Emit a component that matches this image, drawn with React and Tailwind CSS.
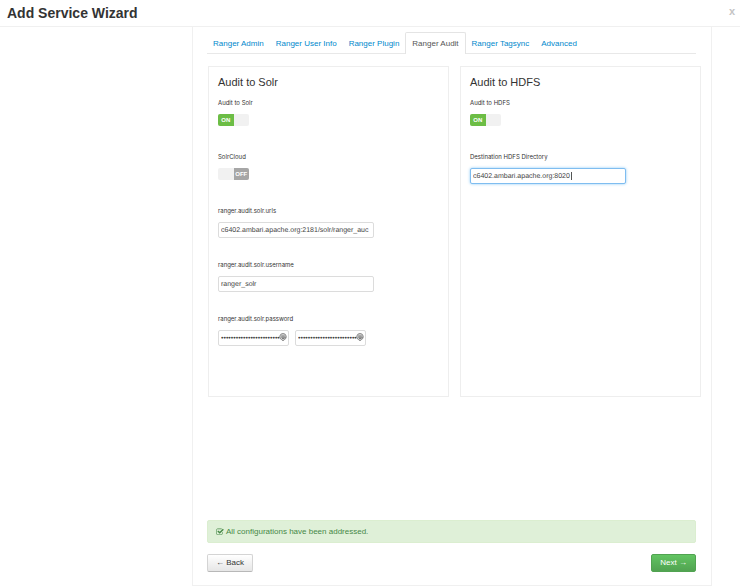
const TABS = ["Ranger Admin", "Ranger User Info", "Ranger Plugin", "Ranger Audit", "Ranger Tagsync", "Advanced"];
const ACTIVE_TAB = "Ranger Audit";

const INPUT =
  "block h-4 w-full rounded-[2px] border bg-white px-[2px] text-[7px] leading-[14px] text-[#444] outline-none [text-rendering:geometricPrecision]";

function Field({ id, label, children }) {
  return (
    <div className="h-[54px]">
      <label htmlFor={id} className="mb-[7px] block h-2 whitespace-nowrap font-['Inter','Liberation_Sans',sans-serif] text-[6px] leading-[8px] text-[#333]">
        {label}
      </label>
      {children}
    </div>
  );
}

function Toggle({ id, on }) {
  return (
    <div className="grid h-3 w-[31px] grid-cols-2 overflow-hidden rounded-[2px] text-[6px] font-bold leading-[12px] text-white">
      <input
        id={id}
        type="checkbox"
        role="switch"
        defaultChecked={on}
        className="col-span-2 col-start-1 row-start-1 h-3 appearance-none bg-[#f1f1f1]"
      />
      {on ? (
        <span className="pointer-events-none col-start-1 row-start-1 bg-[#6cbd45] text-center">ON</span>
      ) : (
        <span className="pointer-events-none col-start-2 row-start-1 bg-[#a6a6a6] text-center">OFF</span>
      )}
    </div>
  );
}

function PasswordInput({ id, label }) {
  return (
    <div className="relative w-[71px]">
      <input
        id={id}
        type="password"
        aria-label={label}
        defaultValue="rangersolrauditpassword12"
        className={`${INPUT} border-[#dcdcdc]`}
      />
      <svg viewBox="0 0 16 16" className="absolute right-[2px] top-[3px] size-2" aria-hidden="true">
        <path d="M8 1a6.500 6.500 0 0 1 2.500 12.500L8 15.500l-2.500-2A6.500 6.500 0 0 1 8 1z" fill="#d4d4d4" stroke="#808080" strokeWidth="1.800" />
        <path d="M4.500 6h7M4.500 8.500h9M6 11h5" stroke="#606060" strokeWidth="1.500" />
      </svg>
    </div>
  );
}

function Card({ title, children }) {
  return (
    <section className="min-h-[331px] border border-[#eeeeee] px-[9px] pt-2">
      <h2 className="mb-[10px] text-[11px] leading-[14px] text-[#333]">{title}</h2>
      {children}
    </section>
  );
}

export default function App() {
  return (
    <div className="flex min-h-screen flex-col bg-white font-['Liberation_Sans',Arial,sans-serif] text-[8px] text-[#333]">
      <header className="flex h-[27px] items-center justify-between border-b border-[#f0f0f0] pl-[7px] pr-[5px]">
        <h1 className="text-[14px] font-bold leading-[20px]">Add Service Wizard</h1>
        <button type="button" aria-label="Close" className="pb-1 text-[11px] font-bold leading-[12px] text-[#c4c4c4]">
          x
        </button>
      </header>

      <main className="ml-48 mr-7 flex flex-1 flex-col border-x border-b border-[#f0f0f0] pb-[13px]">
        <nav className="ml-[14px] mr-[15px] mt-[5px] flex h-[22px] border-b border-[#e8e8e8]">
          {TABS.map((tab) => (
            <a
              key={tab}
              href="#"
              className={
                tab === ACTIVE_TAB
                  ? "h-[22px] whitespace-nowrap rounded-t-[2px] border border-b-0 border-[#e4e4e4] bg-white px-[6px] leading-[21px] text-[#555]"
                  : "h-[22px] whitespace-nowrap border border-b-0 border-transparent px-[5px] leading-[21px] text-[#0088cc]"
              }
            >
              {tab}
            </a>
          ))}
        </nav>

        <div className="ml-[15px] mr-[10px] mt-3 grid grid-cols-2 gap-[11px]">
          <Card title="Audit to Solr">
            <Field id="audit-solr" label="Audit to Solr">
              <Toggle id="audit-solr" on />
            </Field>
            <Field id="solr-cloud" label="SolrCloud">
              <Toggle id="solr-cloud" on={false} />
            </Field>
            <Field id="solr-urls" label="ranger.audit.solr.urls">
              <div className="w-[156px]">
                <input
                  id="solr-urls"
                  defaultValue="c6402.ambari.apache.org:2181/solr/ranger_auc"
                  className={`${INPUT} border-[#dcdcdc]`}
                />
              </div>
            </Field>
            <Field id="solr-username" label="ranger.audit.solr.username">
              <div className="w-[156px]">
                <input id="solr-username" defaultValue="ranger_solr" className={`${INPUT} border-[#dcdcdc]`} />
              </div>
            </Field>
            <Field id="solr-password" label="ranger.audit.solr.password">
              <div className="flex gap-[6px]">
                <PasswordInput id="solr-password" label="ranger.audit.solr.password" />
                <PasswordInput id="solr-password-confirm" label="Confirm password" />
              </div>
            </Field>
          </Card>

          <Card title="Audit to HDFS">
            <Field id="audit-hdfs" label="Audit to HDFS">
              <Toggle id="audit-hdfs" on />
            </Field>
            <Field id="hdfs-directory" label="Destination HDFS Directory">
              <div className="relative w-[156px]">
                <input
                  id="hdfs-directory"
                  autoFocus
                  defaultValue="c6402.ambari.apache.org:8020"
                  className={`${INPUT} border-[#7fbdf0] caret-transparent shadow-[0_0_3px_#8cc8f5]`}
                />
                <span className="pointer-events-none absolute left-[101px] top-1 h-2 w-px bg-[#555]" aria-hidden="true" />
              </div>
            </Field>
          </Card>
        </div>

        <footer className="ml-[14px] mr-[15px] mt-auto pt-6">
          <div role="status" className="mb-[11px] flex h-[23px] items-center gap-[2px] rounded-[2px] border border-[#dbeed0] bg-[#dff0d8] px-2 text-[#468847]">
            <svg viewBox="0 0 1792 1792" className="size-2" fill="currentColor" aria-hidden="true">
              <path d="M1472 930v318q0 119-84.500 203.500t-203.500 84.500h-832q-119 0-203.500-84.500t-84.500-203.500v-832q0-119 84.500-203.500t203.500-84.500h832q63 0 117 25 15 7 18 23 3 17-9 29l-49 49q-10 10-23 10-3 0-9-2-23-6-45-6h-832q-66 0-113 47t-47 113v832q0 66 47 113t113 47h832q66 0 113-47t47-113v-254q0-13 9-22l64-64q10-10 23-10 6 0 12 3 20 8 20 29zm231-489l-814 814q-24 24-57 24t-57-24l-430-430q-24-24-24-57t24-57l110-110q24-24 57-24t57 24l263 263 647-647q24-24 57-24t57 24l110 110q24 24 24 57t-24 57z" />
            </svg>
            <span>All configurations have been addressed.</span>
          </div>
          <div className="flex justify-between">
            <button type="button" className="h-[18px] rounded-[2px] border border-[#d4d4d4] border-b-[#b8b8b8] bg-gradient-to-b from-white to-[#e6e6e6] px-2 leading-[16px] text-[#333]">
              ← Back
            </button>
            <button type="button" className="h-[18px] rounded-[2px] border border-[#51a351] bg-gradient-to-b from-[#62c462] to-[#51a351] px-2 leading-[16px] text-white">
              Next →
            </button>
          </div>
        </footer>
      </main>
    </div>
  );
}
